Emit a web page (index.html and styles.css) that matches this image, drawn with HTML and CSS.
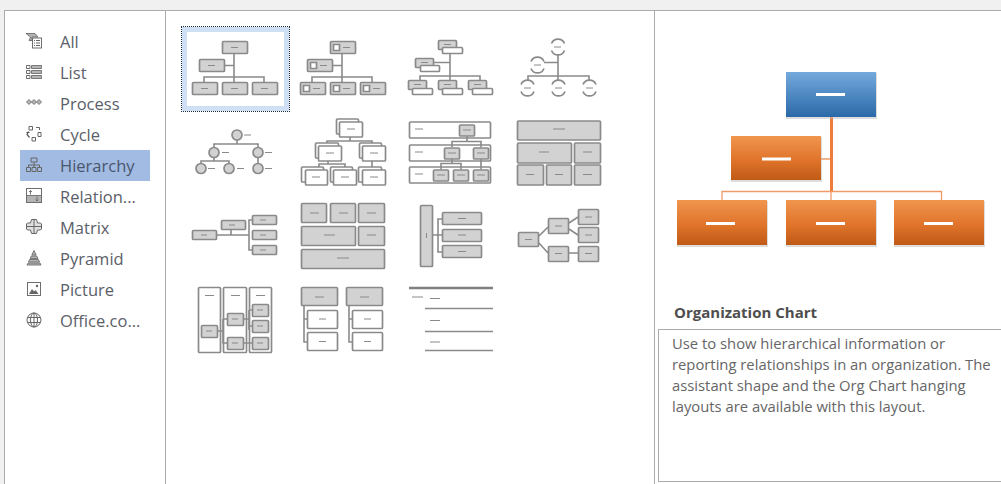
FILE: index.html
```html
<!DOCTYPE html>
<html lang="en">
<head>
<meta charset="utf-8">
<title>Choose a SmartArt Graphic</title>
<link rel="stylesheet" href="styles.css">
</head>
<body>
<main class="dialog">
  <nav class="sidebar">
    <div class="row"><svg class="ico" viewBox="0 0 16 16"><path class="if" d="M0 .5h9l3 3.500H6v3.500H3L4.500 4z"/><rect class="iw" x="6.500" y="5" width="9" height="10"/><path class="il" d="M8 7.500h1M10 7.500h4M8 10h1M10 10h4M8 12.500h1M10 12.500h4"/></svg><span>All</span></div>
    <div class="row"><svg class="ico" viewBox="0 0 16 16"><path class="iw" d="M.5 1.500h3.500v3H.5zM.5 6.500h3.500v3H.5zM.5 11.500h3.500v3H.5z"/><path class="if" d="M5.500 1.500h10v3h-10zM5.500 6.500h10v3h-10zM5.500 11.500h10v3h-10z"/></svg><span>List</span></div>
    <div class="row"><svg class="ico" viewBox="0 0 16 16"><path class="if" d="M.5 7l2.500-2.500L5.500 7 3 9.500zM5.500 7L8 4.500 10.500 7 8 9.500zM10.500 7L13 4.500 15.500 7 13 9.500z"/></svg><span>Process</span></div>
    <div class="row"><svg class="ico" viewBox="0 0 16 16"><path class="il" d="M3 .5h3.500V4H3zM10 1.500h3.500V4M12 6.500h3v4h-3zM6 11.500h3.500V15H6z"/><path class="ik" d="M2.500 5.500L1 8.500l2.500 3M.5 6.500h3"/></svg><span>Cycle</span></div>
    <div class="row"><svg class="ico" viewBox="0 0 16 16"><path class="il" d="M5 1h6v4H5zM.5 10.500H4.500v4H.5zM6 10.500h4v4H6zM11.500 10.500h4v4h-4zM8 5v5.500M2.500 10.500V8h11v2.500"/></svg><span>Hierarchy</span></div>
    <div class="row"><svg class="ico" viewBox="0 0 16 16"><rect class="if" x=".5" y="7.500" width="15" height="7"/><rect class="iw2" x=".5" y=".5" width="15" height="14"/><path class="ia" d="M4.500 6.500V2.500M3 4l1.500-1.500L6 4M11 8.500v4.500M9.500 11.500L11 13l1.500-1.500"/></svg><span>Relation...</span></div>
    <div class="row"><svg class="ico" viewBox="0 0 16 16"><path class="ilf" d="M5.500 .5h5l1 3.500h3l1 1v5l-1 1h-3l-1 3.500h-5l-1-3.500h-3l-1-1V5l1-1h3z"/><path class="il" d="M8 .5v14M.5 7.500h15"/></svg><span>Matrix</span></div>
    <div class="row"><svg class="ico" viewBox="0 0 16 16"><path class="if" d="M8 .5l2.200 4.500H5.800zM5.300 6h5.400l1.200 2.500H4.100zM3.600 9.500h8.800l1.100 2.500H2.500zM2 13h12l1 2H1z"/></svg><span>Pyramid</span></div>
    <div class="row"><svg class="ico" viewBox="0 0 16 16"><rect class="iw2" x="1.500" y="1.500" width="13" height="13"/><path class="id" d="M3 13l3-5 2 2.500 1.500-1.500 3 4z"/><circle class="id" cx="11" cy="5" r="1.200"/></svg><span>Picture</span></div>
    <div class="row"><svg class="ico" viewBox="0 0 16 16"><circle class="il" cx="8" cy="8" r="7"/><ellipse class="il" cx="8" cy="8" rx="3.500" ry="7"/><path class="il" d="M1.500 5.500h13M1.500 10.500h13M8 1v14"/></svg><span>Office.co...</span></div>
  </nav>

  <section class="gallery">
    <div class="cell selected"><svg class="thumb" viewBox="181 26 108 84">
      <path class="ln" d="M234 54v28M224 65.500h10M204 82v-5h60v5"/>
      <rect class="g" x="222.500" y="41.500" width="25" height="12"/><rect class="g" x="199.500" y="59.500" width="25" height="12"/><rect class="g" x="192.500" y="82.500" width="25" height="12"/><rect class="g" x="222.500" y="82.500" width="25" height="12"/><rect class="g" x="252.500" y="82.500" width="25" height="12"/>
      <path class="d" d="M231 47.500h7M208 65.500h7M201 88.500h7M231 88.500h7M261 88.500h7"/>
    </svg></div>
    <div class="cell"><svg class="thumb" viewBox="289 26 108 84">
      <path class="ln" d="M342 54v28M332 65.500h10M312 82v-5h60v5"/>
      <rect class="g" x="330.500" y="41.500" width="25" height="12"/><rect class="g" x="307.500" y="59.500" width="25" height="12"/><rect class="g" x="300.500" y="82.500" width="25" height="12"/><rect class="g" x="330.500" y="82.500" width="25" height="12"/><rect class="g" x="360.500" y="82.500" width="25" height="12"/>
      <path class="w" d="M333.500 44.500h6v6h-6zM310.500 62.500h6v6h-6zM303.500 85.500h6v6h-6zM333.500 85.500h6v6h-6zM363.500 85.500h6v6h-6z"/>
      <path class="d" d="M343 47.500h7M320 65.500h7M313 88.500h7M343 88.500h7M373 88.500h7"/>
    </svg></div>
    <div class="cell"><svg class="thumb" viewBox="397 26 108 84">
      <path class="ln" d="M450 54v26M434 62.500h16M420 80v-4h60v4"/>
      <rect class="g" x="438.500" y="40.500" width="18" height="9"/><rect class="w" x="442.500" y="47.500" width="20" height="6"/>
      <rect class="g" x="415.500" y="58.500" width="18" height="9"/><rect class="w" x="420.500" y="65.500" width="19" height="6"/>
      <rect class="g" x="408.500" y="80.500" width="18" height="9"/><rect class="w" x="412.500" y="88.500" width="20" height="6"/>
      <rect class="g" x="438.500" y="80.500" width="18" height="9"/><rect class="w" x="442.500" y="88.500" width="20" height="6"/>
      <rect class="g" x="468.500" y="80.500" width="18" height="9"/><rect class="w" x="472.500" y="88.500" width="20" height="6"/>
      <path class="d" d="M444 44.500h7M421 62.500h7M414 84.500h7M444 84.500h7M474 84.500h7"/>
    </svg></div>
    <div class="cell"><svg class="thumb" viewBox="505 26 108 84">
      <path class="ln" d="M558 54v27M544 62.500h14M528 81v-5h61v5"/>
      <path class="arc" d="M551.500 43.500a7 7 0 0 1 13 0M551.500 50.500a7 7 0 0 0 13 0M531 61.500a7 7 0 0 1 13 0M531 68.500a7 7 0 0 0 13 0M521 84.500a7 7 0 0 1 13 0M521 91.500a7 7 0 0 0 13 0M552 84.500a7 7 0 0 1 13 0M552 91.500a7 7 0 0 0 13 0M583 84.500a7 7 0 0 1 13 0M583 91.500a7 7 0 0 0 13 0"/>
      <path class="d" d="M554 47h7M534 65h7M524 88h7M555 88h7M586 88h7"/>
    </svg></div>

    <div class="cell"><svg class="thumb" viewBox="181 110 108 83">
      <path class="ln" d="M237 139v4.500M214 148v-4.500h44v4M214 156v4.500M201 164v-3.500h28v3.500M258 156v8"/>
      <circle class="g" cx="237" cy="134.500" r="5"/><circle class="g" cx="214" cy="152" r="5"/><circle class="g" cx="258" cy="152" r="5"/><circle class="g" cx="201" cy="168" r="5"/><circle class="g" cx="229" cy="168" r="5"/><circle class="g" cx="258" cy="168" r="5"/>
      <path class="d" d="M244 134.500h7M222 152h7M265 152h7M208 168h7M237 168h7M265 168h7"/>
    </svg></div>
    <div class="cell"><svg class="thumb" viewBox="289 110 108 83">
      <path class="ln" d="M350 136v4.500M327 145v-4.500h45v4M328 160v3.500M319 169v-5.500h26v5.500M372 160v9"/>
      <rect class="w" x="336.500" y="118.500" width="22" height="15"/><rect class="w" x="339.500" y="121.500" width="23" height="15"/>
      <rect class="w" x="315.500" y="142.500" width="23" height="15"/><rect class="w" x="318.500" y="145.500" width="23" height="15"/>
      <rect class="w" x="359.500" y="142.500" width="22" height="15"/><rect class="w" x="362.500" y="145.500" width="23" height="15"/>
      <rect class="w" x="301.500" y="166.500" width="22" height="15"/><rect class="w" x="305.500" y="169.500" width="22" height="15"/>
      <rect class="w" x="330.500" y="166.500" width="22" height="15"/><rect class="w" x="333.500" y="169.500" width="23" height="15"/>
      <rect class="w" x="358.500" y="166.500" width="23" height="15"/><rect class="w" x="362.500" y="169.500" width="23" height="15"/>
      <path class="d" d="M347 128.500h8M326 152.500h8M370 152.500h8M312 176.500h8M341 176.500h8M370 176.500h8"/>
    </svg></div>
    <div class="cell"><svg class="thumb" viewBox="397 110 108 83">
      <rect class="w" x="409.500" y="121.500" width="81" height="16"/><rect class="w" x="409.500" y="144.500" width="81" height="16"/><rect class="w" x="409.500" y="166.500" width="81" height="16"/>
      <path class="ln" d="M467 135v6M452 147v-6h29v6M452 158v5M441 169v-6h20v6M481 158v11"/>
      <rect class="g" x="459.500" y="124.500" width="15" height="11"/><rect class="g" x="444.500" y="147.500" width="15" height="11"/><rect class="g" x="473.500" y="147.500" width="15" height="11"/><rect class="g" x="433.500" y="169.500" width="15" height="11"/><rect class="g" x="453.500" y="169.500" width="15" height="11"/><rect class="g" x="473.500" y="169.500" width="15" height="11"/>
      <path class="d" d="M415 128.500h8M415 151.500h8M415 173.500h8M463 129.500h8M448 152.500h8M477 152.500h8M437 174.500h8M457 174.500h8M477 174.500h8"/>
    </svg></div>
    <div class="cell"><svg class="thumb" viewBox="505 110 108 83">
      <rect class="g" x="517.500" y="120.500" width="83" height="19"/><rect class="g" x="517.500" y="142.500" width="54" height="20"/><rect class="g" x="574.500" y="142.500" width="26" height="20"/><rect class="g" x="517.500" y="164.500" width="26" height="20"/><rect class="g" x="546.500" y="164.500" width="25" height="20"/><rect class="g" x="574.500" y="164.500" width="26" height="20"/>
      <path class="d" d="M553 128.500h12M539 151.500h10M583 151.500h9M526 174h8M555 174h8M583 174h9"/>
    </svg></div>

    <div class="cell"><svg class="thumb" viewBox="181 193 108 84">
      <path class="ln" d="M217 235h32M231 230v5M252 220h-3v30h3"/>
      <rect class="g" x="192.500" y="230.500" width="24" height="9"/><rect class="g" x="221.500" y="220.500" width="24" height="9"/><rect class="g" x="252.500" y="215.500" width="24" height="9"/><rect class="g" x="252.500" y="230.500" width="24" height="9"/><rect class="g" x="252.500" y="245.500" width="24" height="9"/>
      <path class="d" d="M201 235h6M229 225h6M260 220h6M260 235h6M260 250h6"/>
    </svg></div>
    <div class="cell"><svg class="thumb" viewBox="289 193 108 84">
      <rect class="g" x="301.500" y="203.500" width="25" height="19"/><rect class="g" x="330.500" y="203.500" width="25" height="19"/><rect class="g" x="358.500" y="203.500" width="26" height="19"/><rect class="g" x="301.500" y="226.500" width="54" height="19"/><rect class="g" x="358.500" y="226.500" width="26" height="19"/><rect class="g" x="301.500" y="249.500" width="83" height="19"/>
      <path class="d" d="M310 213h9M339 213h9M367 213h9M324 235h11M367 235h9M337 258h12"/>
    </svg></div>
    <div class="cell"><svg class="thumb" viewBox="397 193 108 84">
      <path class="ln" d="M433 235h9M442 219h-4v33h4"/>
      <rect class="g" x="420.500" y="205.500" width="12" height="61"/><rect class="g" x="442.500" y="212.500" width="39" height="12"/><rect class="g" x="442.500" y="229.500" width="39" height="12"/><rect class="g" x="442.500" y="245.500" width="39" height="12"/>
      <path class="d" d="M426.500 233v5M458 218.500h8M458 235h8M458 251.500h8"/>
    </svg></div>
    <div class="cell"><svg class="thumb" viewBox="505 193 108 84">
      <path class="ln" d="M539 236l9-9M539 243l9 10M569 223l9-6M569 229l9 6M569 253h9"/>
      <rect class="g" x="518.500" y="232.500" width="20" height="14"/><rect class="g" x="548.500" y="218.500" width="20" height="15"/><rect class="g" x="548.500" y="246.500" width="20" height="15"/><rect class="g" x="578.500" y="209.500" width="20" height="15"/><rect class="g" x="578.500" y="227.500" width="20" height="15"/><rect class="g" x="578.500" y="246.500" width="20" height="15"/>
      <path class="d" d="M525 239.500h7M555 226h7M555 253.500h7M585 217h7M585 235h7M585 253.500h7"/>
    </svg></div>

    <div class="cell"><svg class="thumb" viewBox="181 277 108 84">
      <rect class="w" x="198.500" y="287.500" width="22" height="65"/><rect class="w" x="223.500" y="287.500" width="23" height="65"/><rect class="w" x="249.500" y="287.500" width="22" height="65"/>
      <path class="ln" d="M218 331h5M223 319v24h4M223 319h4M243 319h6M249 310v20M249 310h3M249 326h3M243 343h9"/>
      <rect class="g" x="201.500" y="325.500" width="16" height="12"/><rect class="g" x="227.500" y="313.500" width="16" height="12"/><rect class="g" x="227.500" y="337.500" width="16" height="12"/><rect class="g" x="252.500" y="304.500" width="16" height="12"/><rect class="g" x="252.500" y="320.500" width="16" height="12"/><rect class="g" x="252.500" y="337.500" width="16" height="12"/>
      <path class="d" d="M205 295.500h9M231 295.500h9M256 295.500h9M206 331h6M232 319h6M232 343h6M257 310h6M257 326h6M257 343h6"/>
    </svg></div>
    <div class="cell"><svg class="thumb" viewBox="289 277 108 84">
      <path class="ln" d="M304 306v36h3M304 319h3M349 306v36h3M349 319h3"/>
      <rect class="g" x="301.500" y="287.500" width="36" height="18"/><rect class="g" x="346.500" y="287.500" width="36" height="18"/><rect class="w" x="307.500" y="310.500" width="30" height="18"/><rect class="w" x="307.500" y="332.500" width="30" height="18"/><rect class="w" x="352.500" y="310.500" width="30" height="18"/><rect class="w" x="352.500" y="332.500" width="30" height="18"/>
      <path class="d" d="M315 297h9M360 297h9M319 319h7M319 341.500h7M364 319h7M364 341.500h7"/>
    </svg></div>
    <div class="cell"><svg class="thumb" viewBox="397 277 108 84">
      <path class="bar" d="M409 288h84"/>
      <path class="ln" d="M425 308.500h68M425 331.500h68M425 350.500h68"/>
      <path class="d" d="M412 297h11M430 298.500h10M430 320.500h10M430 342h10"/>
    </svg></div>
  </section>

  <aside class="detail">
    <svg class="chart" viewBox="655 60 346 200">
      <defs>
        <linearGradient id="blue" x1="0" y1="0" x2="0" y2="1"><stop offset="0" stop-color="#74aadd"/><stop offset="1" stop-color="#2a69a8"/></linearGradient>
        <linearGradient id="orange" x1="0" y1="0" x2="0" y2="1"><stop offset="0" stop-color="#f0954f"/><stop offset=".55" stop-color="#e0742a"/><stop offset="1" stop-color="#bf5a16"/></linearGradient>
      </defs>
      <path class="bus" d="M722 200v-8.500h219.500v8.500M831 191v9M821 159h10"/>
      <path class="trunk" d="M831.500 117v74"/>
      <rect class="box-shadow" x="786" y="73" width="91" height="46"/><rect class="box-shadow" x="731" y="137" width="91" height="45"/><rect class="box-shadow" x="677" y="201" width="91" height="46"/><rect class="box-shadow" x="786" y="201" width="91" height="46"/><rect class="box-shadow" x="894" y="201" width="91" height="46"/>
      <rect fill="url(#blue)" x="786" y="72" width="90" height="45"/>
      <rect fill="url(#orange)" x="731" y="136" width="90" height="44"/>
      <rect fill="url(#orange)" x="677" y="200" width="90" height="45"/>
      <rect fill="url(#orange)" x="786" y="200" width="90" height="45"/>
      <rect fill="url(#orange)" x="894" y="200" width="90" height="45"/>
      <path class="dash" d="M816 94.500h29M762 159h29M706 223.500h29M816 223.500h29M924 223.500h29"/>
    </svg>
    <h2 class="title">Organization Chart</h2>
    <p class="desc">Use to show hierarchical information or reporting relationships in an organization. The assistant shape and the Org Chart hanging layouts are available with this layout.</p>
  </aside>
</main>
</body>
</html>
```
FILE: styles.css
```css
* { box-sizing: border-box; }
html, body { margin: 0; height: 100%; }
body { background: #f0f0f0; overflow: hidden; font-family: "Open Sans", "Noto Sans", sans-serif; color: #595959; }
.dialog { display: flex; height: 484px; margin: 10px 0 0 4px; background: #fff; border-top: 1px solid #ababab; border-left: 1px solid #ababab; }
.sidebar { flex: 0 0 161px; border-right: 1px solid #ababab; padding: 15px 15px 0; display: flex; flex-direction: column; }
.row { display: flex; align-items: center; gap: 18px; height: 31px; padding-left: 6px; font-size: 16.500px; white-space: nowrap; color: #5b6068; }
.row span { padding-bottom: 1px; }
.row:nth-child(5) { background: #a1bbe2; color: #4a566e; }
.ico { flex: 0 0 16px; width: 16px; height: 16px; margin-bottom: 2px; }
.if { fill: #b4b4b4; stroke: #6e6e6e; stroke-width: .9; }
.iw { fill: #fff; stroke: #6e6e6e; }
.iw2 { fill: none; stroke: #6e6e6e; }
.il { fill: none; stroke: #666; }
.ilf { fill: #e0e0e0; stroke: #666; }
.ia { fill: none; stroke: #666; stroke-width: .9; }
.ik { fill: none; stroke: #555; stroke-width: 1.200; }
.id { fill: #666; }
.gallery { flex: 0 0 489px; border-right: 1px solid #ababab; padding: 15px 0 0 15px; display: grid; grid-template-columns: repeat(4, 108px); grid-auto-rows: 83.500px; align-content: start; }
.cell { position: relative; height: 84px; }
.selected::before { content: ""; position: absolute; left: 0; top: 0; width: 107px; height: 84px; border: 1px dotted #1b2a3e; outline: 5px solid #cfe0f5; outline-offset: -6px; }
.thumb { position: relative; display: block; width: 108px; height: 84px; filter: blur(.35px); }
.g { fill: #d2d2d2; stroke: #8a8a8a; stroke-width: 1.700; rx: 1px; }
.w { fill: #fff; stroke: #8a8a8a; stroke-width: 1.700; rx: 1px; }
.ln { fill: none; stroke: #8a8a8a; stroke-width: 1.600; }
.arc { fill: none; stroke: #8a8a8a; stroke-width: 1.700; }
.d { fill: none; stroke: #8a8a8a; stroke-width: 1; }
.bar { fill: none; stroke: #808080; stroke-width: 2.500; }
.detail { flex: 1; min-width: 0; display: flex; flex-direction: column; }
.chart { display: block; width: 346px; height: 200px; margin-top: 49px; filter: blur(.3px); }
.box-shadow { fill: #bbb; opacity: .5; }
.bus { fill: none; stroke: #f09a67; stroke-width: 1.300; }
.trunk { fill: none; stroke: #ee7d3c; stroke-width: 3; }
.dash { fill: none; stroke: #fff; stroke-width: 3; }
.title { margin: 42px 0 0 19px; font-size: 15px; line-height: 20px; font-weight: 700; color: #4e4e4e; }
.desc { margin: 7px -4px 0 3px; height: 153px; padding: 3px 10px 0 13px; border: 1px solid #ababab; border-right: 0; font-size: 14.800px; line-height: 21px; color: #666; }
```
